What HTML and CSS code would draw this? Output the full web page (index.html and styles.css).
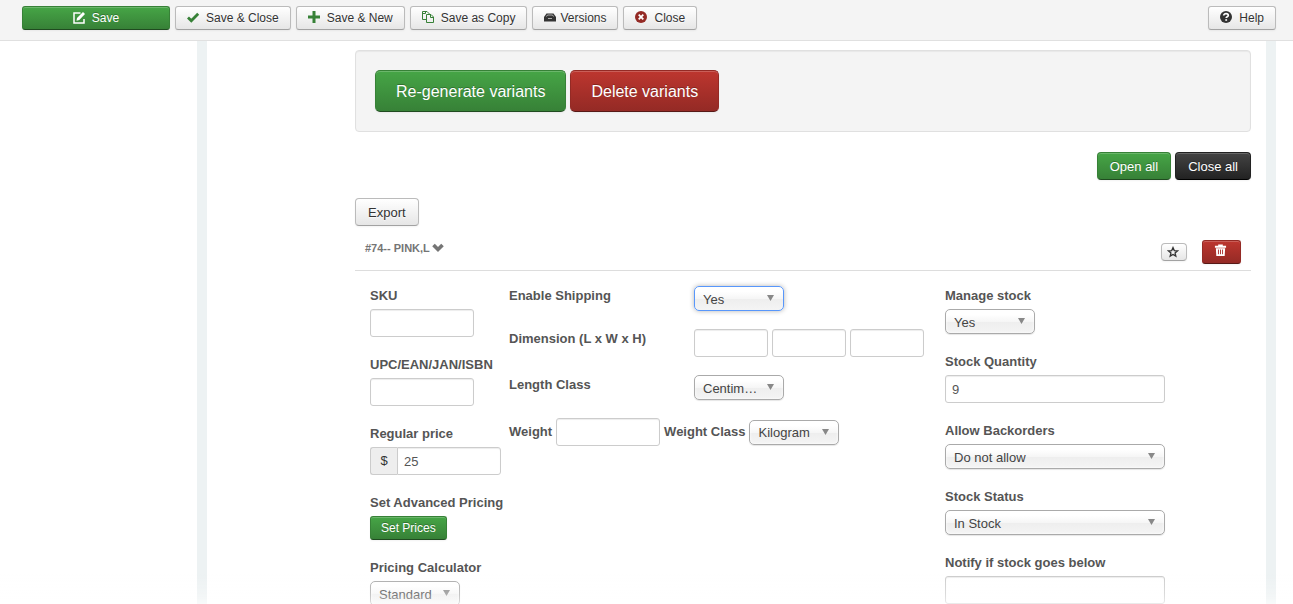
FILE: index.html
```html
<!DOCTYPE html>
<html lang="en">
<head>
<meta charset="utf-8">
<title>Product variants</title>
<link rel="stylesheet" href="styles.css">
</head>
<body>
<div class="app">
  <header class="toolbar">
    <button class="btn btn-small btn-success btn-save" type="button"><svg class="icon" viewBox="0 0 14 14"><path d="M8.500 2H2v10h10V8" fill="none" stroke="#fff" stroke-width="1.500"/><path d="M4.500 9.700l.5-2.800L11 1l2 2-5.700 6z" fill="#fff"/></svg>Save</button>
    <button class="btn btn-small" type="button"><svg class="icon" viewBox="0 0 14 14"><path d="M2 6.500l3.300 3.300L12.200 2.800" fill="none" stroke="#378137" stroke-width="2.800"/></svg>Save &amp; Close</button>
    <button class="btn btn-small" type="button"><svg class="icon" viewBox="0 0 14 14"><path d="M7 0v12M1 6h12" stroke="#378137" stroke-width="3"/></svg>Save &amp; New</button>
    <button class="btn btn-small" type="button"><svg class="icon" viewBox="0 0 14 14"><path d="M5.500 8.500h-4v-8h4.500l2.500 2.500M4.500 .5v2h-3M5.500 3.500h4.500l2.500 2.500v5.500h-7zM9.500 3.500v3h3" fill="none" stroke="#378137"/></svg>Save as Copy</button>
    <button class="btn btn-small btn-tight" type="button"><svg class="icon" viewBox="0 0 14 14"><path d="M1 6l2.500-3.500h7L13 6v4.500H1z" fill="#333"/><path d="M3.500 5.500l1-1.500h5l1 1.500M5 7.500h4" stroke="#ccc" stroke-width=".8" fill="none"/></svg>Versions</button>
    <button class="btn btn-small" type="button"><svg class="icon" viewBox="0 0 14 14"><circle cx="7" cy="6" r="6" fill="#942a25"/><path d="M4.700 3.700l4.600 4.600M9.300 3.700l-4.600 4.600" stroke="#fff" stroke-width="1.800"/></svg>Close</button>
    <button class="btn btn-small btn-help" type="button"><svg class="icon" viewBox="0 0 14 14"><circle cx="7" cy="6" r="6" fill="#333"/><path d="M4.700 4.600c0-2.600 4.600-2.400 4.600-.2 0 1.400-2.100 1.300-2.100 2.700" fill="none" stroke="#fff" stroke-width="1.700"/><path d="M6.300 8.200h1.800v1.600H6.300z" fill="#fff"/></svg>Help</button>
  </header>

  <main class="panel">
    <section class="well">
      <button class="btn btn-large btn-success" type="button">Re-generate variants</button>
      <button class="btn btn-large btn-danger" type="button">Delete variants</button>
    </section>
    <div class="toggle-all">
      <button class="btn btn-success" type="button">Open all</button>
      <button class="btn btn-inverse" type="button">Close all</button>
    </div>
    <div class="export"><button class="btn" type="button">Export</button></div>

    <div class="variant-head">
      <a class="variant-title" href="#variant">#74-- PINK,L<svg class="chevron" viewBox="0 0 12 12"><path d="M1.500 3L6 7.500 10.500 3" fill="none" stroke="#757575" stroke-width="3.600"/></svg></a>
      <button class="btn btn-star" type="button" aria-label="Set default"><svg viewBox="0 0 14 14"><path d="M7 1.800l1.500 3.500 3.800.3-2.900 2.500.9 3.700L7 9.800l-3.300 2 .9-3.700-2.900-2.500 3.800-.3z" fill="none" stroke="#333" stroke-width="1.500"/></svg></button>
      <button class="btn btn-danger btn-trash" type="button" aria-label="Delete variant"><svg viewBox="0 0 14 14"><path d="M1 2h3.500V.5h5V2H13v2H1zM2 4.500h10l-.5 8.500h-9z" fill="#fff"/><path d="M4.800 6v5M7 6v5M9.200 6v5" stroke="#a92e2b"/></svg></button>
    </div>

    <form class="variant" id="variant">
      <div class="column">
        <div class="field"><label for="sku">SKU</label><input class="text text-medium" id="sku" type="text"></div>
        <div class="field"><label for="upc">UPC/EAN/JAN/ISBN</label><input class="text text-medium" id="upc" type="text"></div>
        <div class="field"><label for="price">Regular price</label>
          <div class="prepend"><span class="addon">$</span><input class="text text-medium" id="price" type="text" value="25"></div></div>
        <div class="field"><label for="prices">Set Advanced Pricing</label><button class="btn btn-small btn-success btn-prices" id="prices" type="button">Set Prices</button></div>
        <div class="field"><label for="calc">Pricing Calculator</label><select class="select" id="calc"><option>Standard</option></select></div>
      </div>

      <div class="column shipping">
        <div class="row"><label for="ship">Enable Shipping</label><select class="select select-active" id="ship"><option>Yes</option><option>No</option></select></div>
        <div class="row"><label for="len">Dimension (L x W x H)</label>
          <div class="dimensions"><input class="text text-small" id="len" type="text"><input class="text text-small" type="text" aria-label="Width"><input class="text text-small" type="text" aria-label="Height"></div></div>
        <div class="row"><label for="lclass">Length Class</label><select class="select" id="lclass"><option>Centimetre</option></select></div>
        <div class="weights"><label for="weight">Weight</label><input class="text text-medium" id="weight" type="text"><label for="wclass">Weight Class</label><select class="select" id="wclass"><option>Kilogram</option></select></div>
      </div>

      <div class="column">
        <div class="field"><label for="manage">Manage stock</label><select class="select" id="manage"><option>Yes</option><option>No</option></select></div>
        <div class="field"><label for="qty">Stock Quantity</label><input class="text text-large" id="qty" type="text" value="9"></div>
        <div class="field"><label for="back">Allow Backorders</label><select class="select select-large" id="back"><option>Do not allow</option></select></div>
        <div class="field"><label for="status">Stock Status</label><select class="select select-large" id="status"><option>In Stock</option></select></div>
        <div class="field"><label for="notify">Notify if stock goes below</label><input class="text text-large" id="notify" type="text"></div>
      </div>
    </form>
  </main>
</div>
</body>
</html>
```

FILE: styles.css
```css
* { box-sizing: border-box; }

body {
  margin: 0;
  background: #fff;
  color: #333;
  font: 13px/18px "Liberation Sans", Arial, sans-serif;
}

.app {
  display: flex;
  flex-direction: column;
  height: 100vh;
  overflow: hidden;
}

/* Content fades out at the lower edge of the window */
.app::after {
  content: "";
  position: fixed;
  right: 0;
  bottom: 0;
  left: 0;
  height: 30px;
  background: linear-gradient(rgba(255, 255, 255, 0), rgba(255, 255, 255, .3) 70%, rgba(255, 255, 255, .6));
  pointer-events: none;
}

.toolbar {
  display: flex;
  flex: none;
  gap: 5px;
  padding: 6px 17px 10px 22px;
  background: #f4f4f4;
  border-bottom: 1px solid #e0e0e0;
}

/* Buttons */
.btn {
  display: inline-flex;
  align-items: center;
  justify-content: center;
  height: 28px;
  padding: 2px 12px 0;
  border: 1px solid #bbb;
  border-bottom-color: #a2a2a2;
  border-radius: 4px;
  background: linear-gradient(#fff, #e6e6e6);
  box-shadow: inset 0 1px 0 rgba(255, 255, 255, .2), 0 1px 2px rgba(0, 0, 0, .05);
  color: #333;
  font: inherit;
  text-shadow: 0 1px 1px rgba(255, 255, 255, .75);
  white-space: nowrap;
}

.btn-small {
  height: 24px;
  padding: 0 11px 0 10px;
  border-radius: 3px;
  font-size: 12px;
}

.btn-large {
  height: 42px;
  padding: 2px 20px 0;
  border-radius: 5px;
  font-size: 16px;
}

.btn-success,
.btn-danger,
.btn-inverse {
  color: #fff;
  text-shadow: 0 -1px 0 rgba(0, 0, 0, .25);
}

.btn-success {
  border-color: #378137 #378137 #204b20;
  background: linear-gradient(#46a546, #378137);
}

.btn-danger {
  border-color: #942a25 #942a25 #571916;
  background: linear-gradient(#bd362f, #942a25);
}

.btn-inverse {
  border-color: #222 #222 #000;
  background: linear-gradient(#444, #222);
}

.icon {
  width: 14px;
  height: 14px;
  margin-right: 6px;
}

.btn-tight .icon { margin-right: 3px; }
.btn-save { width: 148px; }
.btn-help { margin-left: auto; }
.btn-prices { padding: 0 10px; }

/* Panel */
.panel {
  flex: 1;
  min-height: 0;
  margin: 0 17px 0 197px;
  padding: 9px 15px 0 148px;
  border: solid #edf2f3;
  border-width: 0 10px;
}

.well {
  display: flex;
  gap: 4px;
  padding: 19px;
  border: 1px solid #e0e0e0;
  border-radius: 4px;
  background: #f4f4f4;
  box-shadow: inset 0 1px 1px rgba(0, 0, 0, .05);
}

.toggle-all {
  display: flex;
  justify-content: flex-end;
  gap: 4px;
  margin: 20px 0 18px;
}

.export { display: flex; }

.variant-head {
  display: flex;
  align-items: center;
  height: 45px;
  padding: 7px 10px 0;
  border-bottom: 1px solid #ddd;
}

.variant-title {
  display: flex;
  align-items: center;
  margin: 0 auto 8px 0;
  color: #757575;
  font-size: 11px;
  font-weight: bold;
  text-decoration: none;
}

.chevron {
  width: 12px;
  height: 12px;
  margin-left: 2px;
}

.btn-star {
  width: 26px;
  height: 18px;
  margin-right: 15px;
  padding: 0 2px 0 0;
}

.btn-star svg { width: 12px; height: 12px; }

.btn-trash {
  width: 39px;
  height: 24px;
  padding: 0 2px 2px 0;
  border-radius: 3px;
}

.btn-trash svg { width: 13px; height: 13px; }

/* Variant form */
.variant {
  display: grid;
  grid-template-columns: 139fr 436fr 306fr;
  padding: 16px 0 0 15px;
}

.column {
  display: flex;
  flex-direction: column;
  gap: 19px;
  min-width: 0;
}

.shipping {
  gap: 18px;
  margin-top: -1px;
}

.field {
  display: flex;
  flex-direction: column;
  align-items: flex-start;
  gap: 4px;
}

label {
  color: #555;
  font-weight: bold;
  white-space: nowrap;
}

.row {
  display: grid;
  grid-template-columns: 185px 1fr;
  align-items: start;
}

.row label { padding-top: 1px; }

.dimensions,
.weights {
  display: flex;
  align-items: center;
  gap: 4px;
}

.text {
  height: 28px;
  padding: 4px 6px;
  border: 1px solid #ccc;
  border-radius: 3px;
  background: #fff;
  box-shadow: inset 0 1px 1px rgba(0, 0, 0, .075);
  color: #555;
  font: inherit;
}

.text-small { width: 74px; }
.text-medium { width: 104px; }
.text-large { width: 220px; }

.prepend { display: flex; }

.prepend .text { border-radius: 0 3px 3px 0; }

.addon {
  width: 27px;
  padding: 4px 0;
  border: 1px solid #ccc;
  border-right: 0;
  border-radius: 3px 0 0 3px;
  background: #eee;
  text-align: center;
}

.select {
  width: 90px;
  height: 25px;
  padding: 2px 20px 0 8px;
  border: 1px solid #aaa;
  border-radius: 5px;
  appearance: none;
  background:
    url("data:image/svg+xml,%3Csvg xmlns='http://www.w3.org/2000/svg' width='7' height='6'%3E%3Cpath d='M0 0h7L3.500 6z' fill='%23888'/%3E%3C/svg%3E") no-repeat right 9px top 8px,
    linear-gradient(#fff 20%, #f6f6f6 50%, #eee 52%, #f4f4f4);
  box-shadow: inset 0 0 3px #fff, 0 1px 1px rgba(0, 0, 0, .1);
  color: #444;
  font: inherit;
  overflow: hidden;
  text-overflow: ellipsis;
  white-space: nowrap;
}

.select-large { width: 220px; }

.select-active {
  border-color: #5897fb;
  box-shadow: 0 0 5px rgba(0, 0, 0, .3);
}
```
